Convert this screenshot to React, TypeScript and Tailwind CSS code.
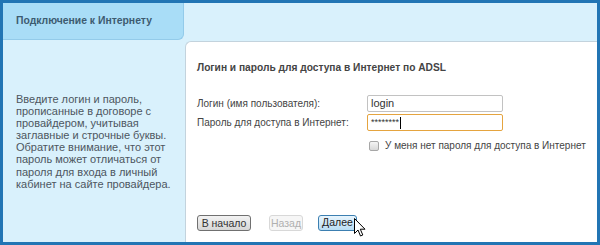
import React from 'react';

const font = { fontFamily: '"Liberation Sans", Arial, sans-serif' };

function Cursor() {
  return (
    <svg
      className="absolute right-[-9px] top-[3px]"
      width="12"
      height="19"
      viewBox="0 0 12 19"
    >
      <path
        d="M0.5 0.5 L0.5 15.5 L4 12 L6.5 18 L8.8 17 L6.3 11.2 L11 11.2 Z"
        fill="#ffffff"
        stroke="#000000"
        strokeWidth="1"
        strokeLinejoin="round"
      />
    </svg>
  );
}

export default function App() {
  return (
    <div
      style={font}
      className="w-[600px] h-[245px] border-[3px] border-[#2275b4] bg-[#d9f1fc] grid grid-cols-[181px_1fr] grid-rows-[37px_1fr] overflow-hidden"
    >
      {/* tab */}
      <div className="bg-[#a9ddf7] rounded-br-[6px] border-r border-b border-[#93cbea] flex items-center pl-[13px]">
        <span className="text-[10.4px] font-bold text-[#3d5b70]">
          Подключение к Интернету
        </span>
      </div>
      <div className="bg-[#d9f1fc]" />

      {/* sidebar */}
      <div className="pl-[13px] pt-[53px] text-[11px] leading-[12.1px] text-[#4d5660]">
        Введите логин и пароль,
        <br />
        прописанные в договоре с
        <br />
        провайдером, учитывая
        <br />
        заглавные и строчные буквы.
        <br />
        Обратите внимание, что этот
        <br />
        пароль может отличаться от
        <br />
        пароля для входа в личный
        <br />
        кабинет на сайте провайдера.
      </div>

      {/* content panel */}
      <div className="ml-[1px] mt-[1px] bg-white rounded-tl-[6px] border-l border-t border-[#c3d3dd] flex flex-col pl-[11px] pt-[19px] pb-[11px]">
        <h2 className="text-[10.2px] font-bold leading-[13px] text-[#444]">
          Логин и пароль для доступа в Интернет по ADSL
        </h2>

        <div className="mt-[21px] grid grid-cols-[170px_136px] gap-y-[2px] text-[10px] text-[#444]">
          <div className="flex items-center h-[17px]">Логин (имя пользователя):</div>
          <div className="h-[17px] border border-[#c2c2c2] rounded-[2px] bg-white flex items-center pl-[3px] text-[#333] text-[11px]">
            login
          </div>
          <div className="flex items-center h-[17px]">Пароль для доступа в Интернет:</div>
          <div className="h-[17px] border border-[#e5a43f] rounded-[2px] bg-white flex items-center pl-[3px] text-[#333] text-[9px]">
            ********
            <span className="ml-[1px] w-px h-[12px] bg-black" />
          </div>
          <div />
          <div className="mt-[5px] flex items-center gap-[6px] whitespace-nowrap">
            <span className="ml-[2px] shrink-0 block w-[10px] h-[10px] border border-[#a7a7a7] rounded-[2px] bg-gradient-to-b from-[#f4f4f4] to-[#d8d8d8]" />
            У меня нет пароля для доступа в Интернет
          </div>
        </div>

        <div className="mt-auto flex items-center text-[10.5px]">
          <button className="h-[16px] w-[54px] border border-[#707070] rounded-[3px] bg-gradient-to-b from-[#f3f3f3] to-[#d6d6d6] text-[#333] leading-none">
            В начало
          </button>
          <button className="ml-[18px] h-[16px] w-[34px] border border-[#d8d8d8] rounded-[3px] bg-[#f6f6f6] text-[#b0b0b0] leading-none">
            Назад
          </button>
          <div className="relative ml-[15px]">
            <button className="h-[16px] w-[39px] border border-[#3c7fb1] rounded-[3px] bg-gradient-to-b from-[#e8f5fd] to-[#b9ddf4] text-[#222] leading-none">
              Далее
            </button>
            <Cursor />
          </div>
        </div>
      </div>
    </div>
  );
}
